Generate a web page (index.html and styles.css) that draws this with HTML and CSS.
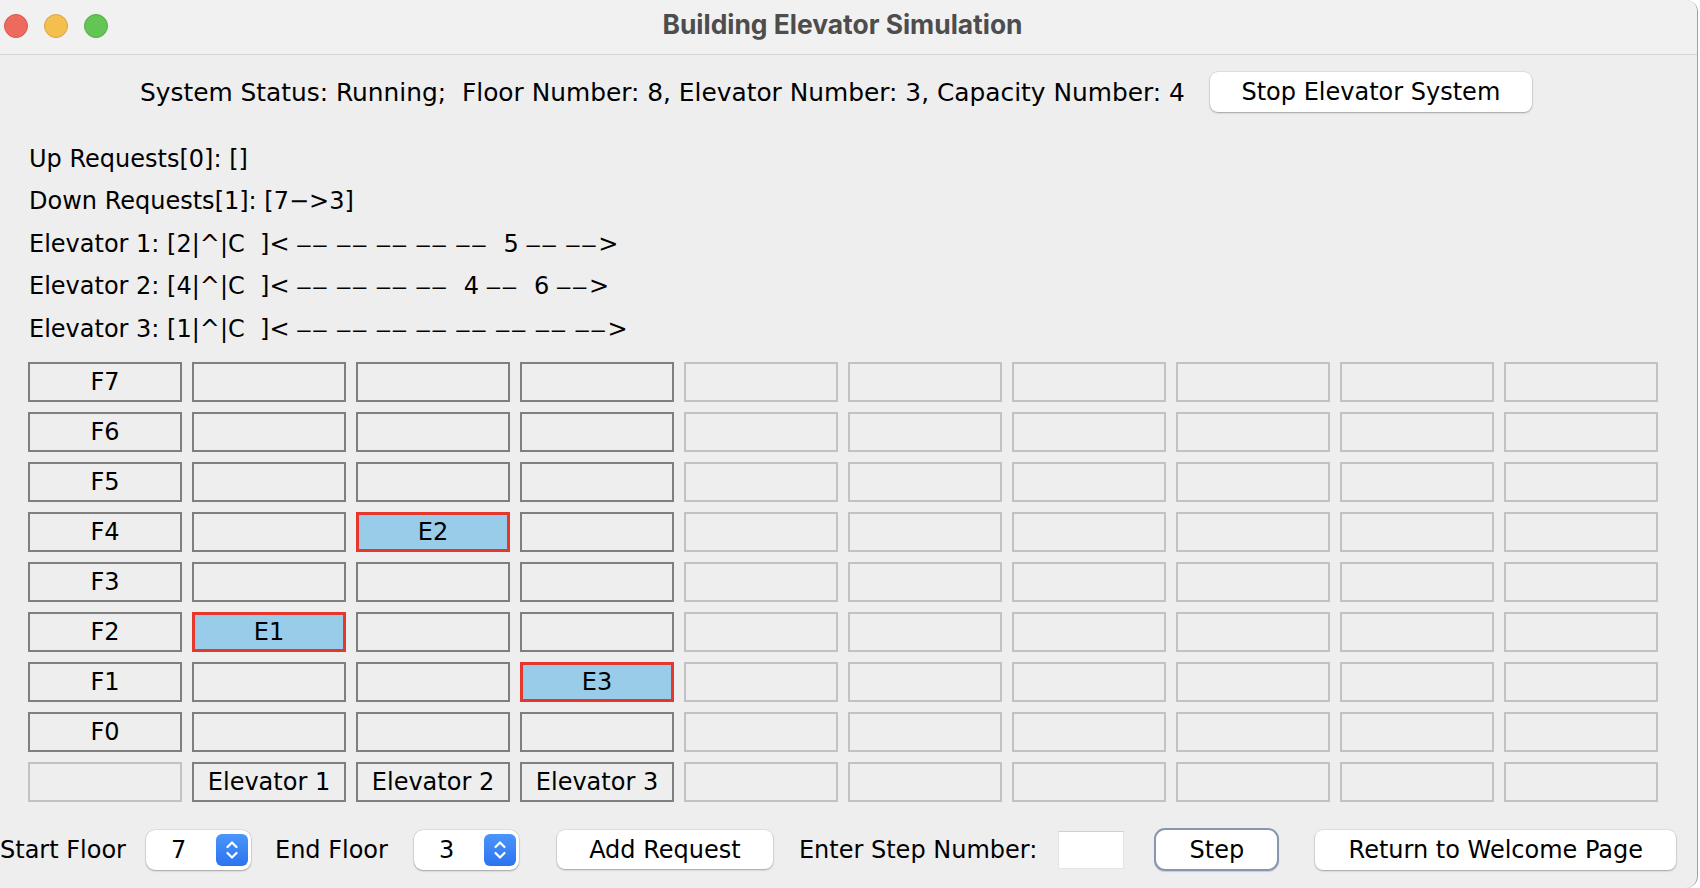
FILE: index.html
```html
<!DOCTYPE html>
<html>
<head>
<meta charset="utf-8">
<title>Building Elevator Simulation</title>
<link rel="stylesheet" href="styles.css">
</head>
<body>
<div class="window">
  <header class="titlebar">
    <div class="lights">
      <span class="light red"></span>
      <span class="light yellow"></span>
      <span class="light green"></span>
    </div>
    <div class="title">Building Elevator Simulation</div>
  </header>
  <main class="content">
    <div class="status-row">
      <span class="status-text">System Status: Running;  Floor Number: 8, Elevator Number: 3, Capacity Number: 4</span>
      <button class="btn stop">Stop Elevator System</button>
    </div>
    <div class="info">
      <div class="line">Up Requests[0]: []</div>
      <div class="line">Down Requests[1]: [7−&gt;3]</div>
      <div class="line">Elevator 1: [2|^|C  ]&lt; <span class="d">––</span> <span class="d">––</span> <span class="d">––</span> <span class="d">––</span> <span class="d">––</span>  5 <span class="d">––</span> <span class="d">––</span>&gt;</div>
      <div class="line">Elevator 2: [4|^|C  ]&lt; <span class="d">––</span> <span class="d">––</span> <span class="d">––</span> <span class="d">––</span>  4 <span class="d">––</span>  6 <span class="d">––</span>&gt;</div>
      <div class="line">Elevator 3: [1|^|C  ]&lt; <span class="d">––</span> <span class="d">––</span> <span class="d">––</span> <span class="d">––</span> <span class="d">––</span> <span class="d">––</span> <span class="d">––</span> <span class="d">––</span>&gt;</div>
    </div>
    <div class="grid">
      <div class="cell dark">F7</div><div class="cell dark"></div><div class="cell dark"></div><div class="cell dark"></div><div class="cell dim"></div><div class="cell dim"></div><div class="cell dim"></div><div class="cell dim"></div><div class="cell dim"></div><div class="cell dim"></div>
      <div class="cell dark">F6</div><div class="cell dark"></div><div class="cell dark"></div><div class="cell dark"></div><div class="cell dim"></div><div class="cell dim"></div><div class="cell dim"></div><div class="cell dim"></div><div class="cell dim"></div><div class="cell dim"></div>
      <div class="cell dark">F5</div><div class="cell dark"></div><div class="cell dark"></div><div class="cell dark"></div><div class="cell dim"></div><div class="cell dim"></div><div class="cell dim"></div><div class="cell dim"></div><div class="cell dim"></div><div class="cell dim"></div>
      <div class="cell dark">F4</div><div class="cell dark"></div><div class="cell car">E2</div><div class="cell dark"></div><div class="cell dim"></div><div class="cell dim"></div><div class="cell dim"></div><div class="cell dim"></div><div class="cell dim"></div><div class="cell dim"></div>
      <div class="cell dark">F3</div><div class="cell dark"></div><div class="cell dark"></div><div class="cell dark"></div><div class="cell dim"></div><div class="cell dim"></div><div class="cell dim"></div><div class="cell dim"></div><div class="cell dim"></div><div class="cell dim"></div>
      <div class="cell dark">F2</div><div class="cell car">E1</div><div class="cell dark"></div><div class="cell dark"></div><div class="cell dim"></div><div class="cell dim"></div><div class="cell dim"></div><div class="cell dim"></div><div class="cell dim"></div><div class="cell dim"></div>
      <div class="cell dark">F1</div><div class="cell dark"></div><div class="cell dark"></div><div class="cell car">E3</div><div class="cell dim"></div><div class="cell dim"></div><div class="cell dim"></div><div class="cell dim"></div><div class="cell dim"></div><div class="cell dim"></div>
      <div class="cell dark">F0</div><div class="cell dark"></div><div class="cell dark"></div><div class="cell dark"></div><div class="cell dim"></div><div class="cell dim"></div><div class="cell dim"></div><div class="cell dim"></div><div class="cell dim"></div><div class="cell dim"></div>
      <div class="cell dim"></div><div class="cell dark">Elevator 1</div><div class="cell dark">Elevator 2</div><div class="cell dark">Elevator 3</div><div class="cell dim"></div><div class="cell dim"></div><div class="cell dim"></div><div class="cell dim"></div><div class="cell dim"></div><div class="cell dim"></div>
    </div>
    <div class="controls">
      <span class="label start">Start Floor</span>
      <div class="spinner sp1">
        <span class="value">7</span>
        <span class="arrows"><svg width="32" height="32" viewBox="0 0 32 32"><path d="M11.5 13 L16 8.5 L20.5 13 M11.5 19 L16 23.5 L20.5 19" fill="none" stroke="#fff" stroke-width="2.2" stroke-linecap="round" stroke-linejoin="round"/></svg></span>
      </div>
      <span class="label end">End Floor</span>
      <div class="spinner sp2">
        <span class="value">3</span>
        <span class="arrows"><svg width="32" height="32" viewBox="0 0 32 32"><path d="M11.5 13 L16 8.5 L20.5 13 M11.5 19 L16 23.5 L20.5 19" fill="none" stroke="#fff" stroke-width="2.2" stroke-linecap="round" stroke-linejoin="round"/></svg></span>
      </div>
      <button class="btn add">Add Request</button>
      <span class="label stepnum">Enter Step Number:</span>
      <input class="field" type="text" value="">
      <button class="btn step">Step</button>
      <button class="btn ret">Return to Welcome Page</button>
    </div>
  </main>
</div>
</body>
</html>
```

FILE: styles.css
```css
* { box-sizing: border-box; }
html, body { margin: 0; padding: 0; }
body {
  width: 1700px;
  height: 888px;
  background: #ffffff;
  overflow: hidden;
  font-family: "DejaVu Sans", "Liberation Sans", sans-serif;
  color: #000;
}
.window {
  width: 1698px;
  height: 888px;
  display: flex;
  flex-direction: column;
  background: #eeeeee;
  border-right: 1px solid #a0a0a0;
  border-radius: 0 12px 12px 0;
  overflow: hidden;
}
.titlebar {
  height: 55px;
  flex: none;
  display: flex;
  align-items: center;
  padding-bottom: 6px;
  background: #f1f1f1;
  border-bottom: 1px solid #d4d4d4;
}
.lights {
  width: 108px;
  flex: none;
  display: flex;
  gap: 16px;
  padding-left: 4px;
  margin-top: 3px;
}
.light {
  width: 24px;
  height: 24px;
  border-radius: 50%;
  display: block;
}
.red { background: #ee6a5f; border: 1px solid #d9564c; }
.yellow { background: #f5bf4f; border: 1px solid #dba43f; }
.green { background: #62c554; border: 1px solid #53ad45; }
.title {
  flex: 1;
  text-align: center;
  padding-right: 120px;
  font-family: "Inter", "Liberation Sans", sans-serif;
  font-weight: 700;
  font-size: 26.4px;
  color: #4d4d4d;
}
.content {
  flex: 1;
  display: flex;
  flex-direction: column;
}
.status-row {
  display: flex;
  align-items: center;
  padding-top: 17px;
  padding-left: 140px;
  height: 57px;
}
.status-text {
  white-space: pre;
  font-size: 24.85px;
}
.btn {
  font-family: "DejaVu Sans", "Liberation Sans", sans-serif;
  font-size: 24px;
  color: #000;
  background: #ffffff;
  border: none;
  border-radius: 8px;
  box-shadow: 0 0 0 0.5px rgba(0,0,0,0.12), 0 1px 2px rgba(0,0,0,0.28);
  padding: 0;
  display: flex;
  align-items: center;
  justify-content: center;
}
.stop {
  width: 322px;
  height: 40px;
  margin-left: 25px;
}
.info {
  padding-top: 25.5px;
  padding-left: 29px;
}
.line {
  white-space: pre;
  font-size: 24px;
  line-height: 42.5px;
}
.d {
  font-family: "Liberation Sans", "DejaVu Sans", sans-serif;
  letter-spacing: 2.7px;
}
.grid {
  margin-top: 12px;
  margin-left: 28px;
  display: grid;
  grid-template-columns: repeat(10, 154px);
  grid-auto-rows: 40px;
  gap: 10px;
}
.cell {
  display: flex;
  align-items: center;
  justify-content: center;
  font-size: 24px;
}
.dark { border: 2px solid #7f7f7f; }
.dim { border: 2px solid #c2c2c2; }
.car {
  background: #99cce9;
  border: 3px solid #e5372b;
}
.controls {
  margin-top: 26px;
  height: 43px;
  display: flex;
  align-items: center;
}
.label {
  font-size: 24px;
  white-space: nowrap;
}
.start { margin-left: 0; }
.spinner {
  width: 105px;
  height: 40px;
  background: #fff;
  border-radius: 9px;
  box-shadow: 0 0 0 0.5px rgba(0,0,0,0.12), 0 1px 2px rgba(0,0,0,0.28);
  display: flex;
  align-items: center;
  justify-content: space-between;
  padding: 0 3px 0 25px;
}
.sp1 { margin-left: 20px; }
.end { margin-left: 24px; }
.sp2 { margin-left: 26px; }
.value { font-size: 24px; }
.arrows {
  width: 32px;
  height: 32px;
  border-radius: 6px;
  background: linear-gradient(#4b95fb, #2b74ef);
  display: block;
}
.arrows svg { display: block; }
.add {
  width: 216px;
  height: 39px;
  margin-left: 38px;
}
.stepnum { margin-left: 26px; }
.field {
  width: 66px;
  height: 38px;
  margin-left: 21px;
  border: 1px solid #e4e4e4;
  border-top-color: #d0d0d0;
  background: #fff;
  padding: 0;
  outline: none;
}
.step {
  width: 125px;
  height: 43px;
  margin-left: 30px;
  border: 2.5px solid #8797b0;
  border-radius: 11px;
  box-shadow: 0 1px 1px rgba(0,0,0,0.15);
}
.ret {
  width: 361px;
  height: 40px;
  margin-left: 36px;
}
```
